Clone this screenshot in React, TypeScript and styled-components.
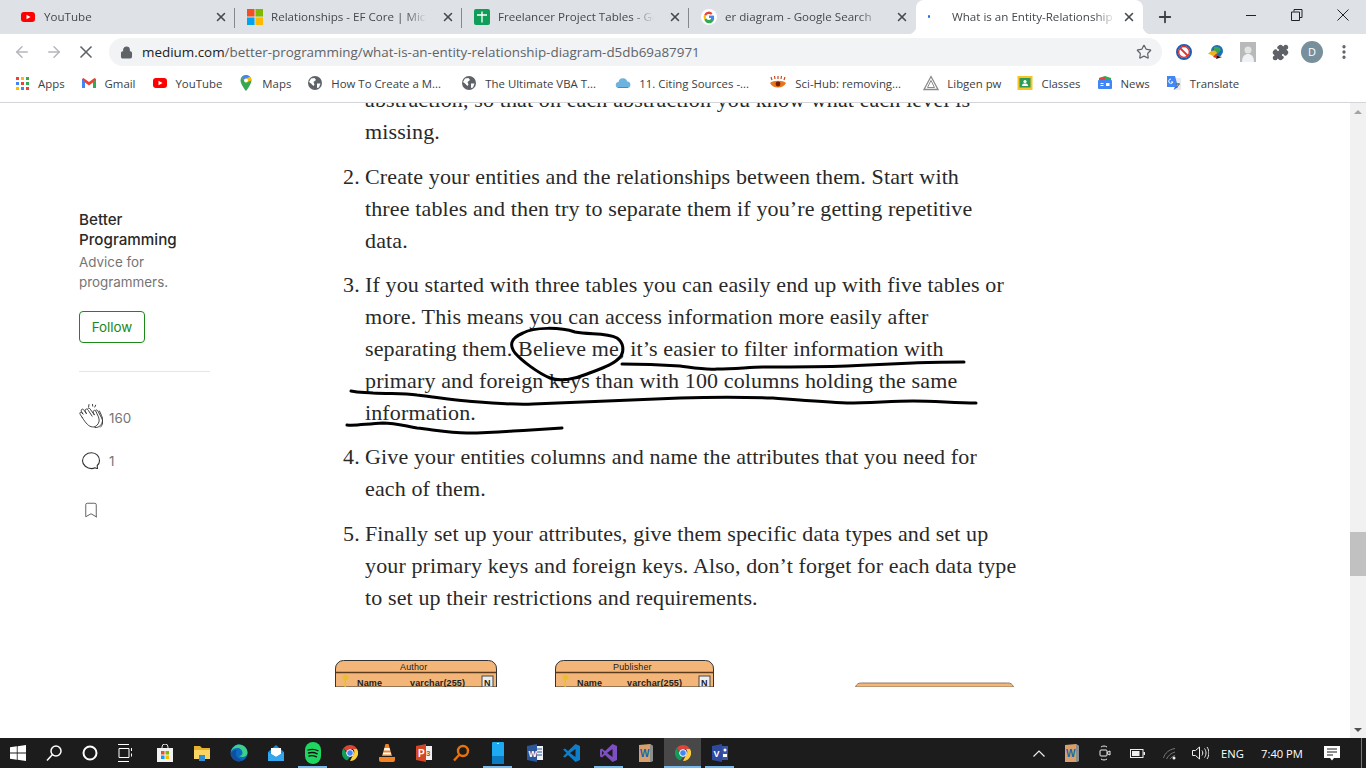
import React from 'react';
import styled, { createGlobalStyle } from 'styled-components';
import {
    ArrowLeft,
    ArrowRight,
    Bookmark,
    Lock,
    MoreVertical,
    Plus,
    Puzzle,
    Star,
    X,
} from 'lucide-react';

const GlobalStyle = createGlobalStyle`
    html, body {
        margin: 0;
        padding: 0;
        height: 100%;
        overflow: hidden;
        background: #fff;
    }
`;

const YouTubeIcon = () => (
    <svg width="16" height="16" viewBox="0 0 16 16">
        <rect x="1" y="3" width="14" height="10" rx="3" fill="#f00" />
        <path d="M6.5 5.7v4.6L10.5 8z" fill="#fff" />
    </svg>
);

const MicrosoftIcon = () => (
    <svg width="16" height="16" viewBox="0 0 16 16">
        <rect width="7.5" height="7.5" fill="#f25022" />
        <rect x="8.5" width="7.5" height="7.5" fill="#7fba00" />
        <rect y="8.5" width="7.5" height="7.5" fill="#00a4ef" />
        <rect x="8.5" y="8.5" width="7.5" height="7.5" fill="#ffb900" />
    </svg>
);

const SheetsIcon = () => (
    <svg width="16" height="16" viewBox="0 0 16 16">
        <rect width="16" height="16" rx="2" fill="#0f9d58" />
        <path d="M8 2.500v11M3 6h10" stroke="#fff" strokeWidth="1.300" />
    </svg>
);

const GoogleIcon = () => (
    <svg width="16" height="16" viewBox="0 0 16 16">
        <circle cx="8" cy="8" r="8" fill="#fff" />
        <path d="M12.6 6.8H8v2h2.7a3 3 0 0 1-5.6.4L3.300 10.600A5 5 0 0 0 13 8c0-.4 0-.8-.4-1.200z" fill="#34a853" />
        <path d="M5 9.200a3 3 0 0 1 0-2.400L3.300 5.400a5 5 0 0 0 0 5.200z" fill="#fbbc05" />
        <path d="M8 5a3 3 0 0 1 2 .8l1.500-1.500A5 5 0 0 0 3.300 5.400L5 6.800A3 3 0 0 1 8 5z" fill="#ea4335" />
        <path d="M13 8c0-.4 0-.8-.4-1.200H8v2h2.700a2.600 2.600 0 0 1-1 1.400l1.600 1.300A5 5 0 0 0 13 8z" fill="#4285f4" />
    </svg>
);

const AppsIcon = () => (
    <svg width="16" height="16" viewBox="0 0 16 16">
        {['#ea4335', '#fbbc05', '#34a853', '#4285f4', '#ea4335', '#34a853', '#fbbc05', '#4285f4', '#ea4335'].map(
            (color, index) => (
                <rect key={index} x={2 + (index % 3) * 5} y={2 + Math.floor(index / 3) * 5} width="3" height="3" fill={color} />
            ),
        )}
    </svg>
);

const GmailIcon = () => (
    <svg width="16" height="16" viewBox="0 0 16 16">
        <path d="M1 4v9h3V7.500L8 10.500l4-3V13h3V4l-1.500-1L8 7 2.500 3z" fill="#ea4335" />
        <path d="M1 4v9h3V7z" fill="#4285f4" />
        <path d="M15 4v9h-3V7z" fill="#34a853" />
    </svg>
);

const MapsIcon = () => (
    <svg width="16" height="16" viewBox="0 0 16 16">
        <path d="M8 0a5.500 5.500 0 0 0-5.500 5.500C2.500 9.500 8 16 8 16s5.500-6.500 5.500-10.500A5.500 5.500 0 0 0 8 0z" fill="#34a853" />
        <path d="M3.500 2.500 8 7.500l5.500-2a5.500 5.500 0 0 0-1.700-4z" fill="#fbbc05" />
        <path d="M8 0a5.500 5.500 0 0 0-4.500 2.500L6 5l5.800-3.500A5.500 5.500 0 0 0 8 0z" fill="#4285f4" />
        <circle cx="8" cy="5.500" r="1.900" fill="#fff" />
    </svg>
);

const WebIcon = () => (
    <svg width="16" height="16" viewBox="0 0 16 16">
        <circle cx="8" cy="8" r="7" fill="#5f6368" />
        <path d="M4 3.500 7.500 3 9 5 6.500 7l1 2.500-1 1.500L4 8.500 2 7zM10 8.500h3.500L12 12.500l-2 .5z" fill="#fff" />
    </svg>
);

const CloudIcon = () => (
    <svg width="16" height="16" viewBox="0 0 16 16">
        <path d="M4 13a3 3 0 0 1-.5-6 4.500 4.500 0 0 1 8.700-.6A3.300 3.300 0 0 1 12 13z" fill="#6db3e0" />
        <path d="M3 12h10v1H3z" fill="#3d8fc7" />
    </svg>
);

const SciHubIcon = () => (
    <svg width="18" height="16" viewBox="0 0 18 16">
        <path d="M1 8c3-3 13-3 16 0-3 6-13 6-16 0z" fill="#e8741c" />
        <circle cx="9" cy="9" r="2.400" fill="#7a1c00" />
        <path d="M3 5 2 2M6 4 5.500 1M9 4V1M12 4l.5-3M15 5l1-3" stroke="#c9471a" strokeWidth="1.200" />
    </svg>
);

const LibgenIcon = () => (
    <svg width="16" height="16" viewBox="0 0 16 16" fill="none" stroke="#8a8a8a">
        <path d="M8 1.500 15 14.500H1z" strokeWidth="1.300" />
        <path d="M8 5.500 11.500 12.500h-7z" />
    </svg>
);

const ClassesIcon = () => (
    <svg width="16" height="16" viewBox="0 0 16 16">
        <rect x="0.500" y="1" width="15" height="14" fill="#f7c325" />
        <rect x="2.500" y="3" width="11" height="9.500" fill="#2b9b57" />
        <circle cx="8" cy="6.500" r="1.600" fill="#fff" />
        <path d="M4.800 11c.3-2 1.500-2.500 3.200-2.500s2.900.5 3.200 2.500z" fill="#fff" />
    </svg>
);

const NewsIcon = () => (
    <svg width="16" height="16" viewBox="0 0 16 16">
        <path d="M2 3 8 1l6 2v2H2z" fill="#34a853" />
        <path d="M2 3l6-1v3H2z" fill="#ea4335" />
        <rect x="1" y="5" width="14" height="9" rx="1" fill="#4285f4" />
        <path d="M3.500 8h3v1h-3zM3.500 10h3v1h-3zM9 8h3.500v3H9z" fill="#fff" />
    </svg>
);

const TranslateIcon = () => (
    <svg width="16" height="16" viewBox="0 0 16 16">
        <path d="M7 3h8v12H8z" fill="#e8eaed" />
        <path d="M1 1h8l3 11H1z" fill="#4285f4" />
        <path d="M9 12 7.500 15 12 12z" fill="#3367d6" />
        <path d="M5 4a2.200 2.200 0 1 0 2 3H5" fill="none" stroke="#fff" />
        <path d="M10 9h4M12 8v1M13 9c-.5 2-1.500 3-3 3.500" fill="none" stroke="#5f6368" />
    </svg>
);

const BlockIcon = () => (
    <svg width="18" height="18" viewBox="0 0 18 18" fill="none">
        <circle cx="9" cy="9" r="7" stroke="#1a5fb4" strokeWidth="2" />
        <circle cx="9" cy="9" r="5.400" stroke="#d33" strokeWidth="1.500" />
        <path d="M5 5l8 8" stroke="#d33" strokeWidth="1.800" />
    </svg>
);

const GlobeArrowIcon = () => (
    <svg width="18" height="18" viewBox="0 0 18 18">
        <circle cx="10" cy="8" r="6" fill="#1c6fb8" />
        <path d="M7 4c3-1 6 0 7 3l-4 4-3-2z" fill="#3aa655" />
        <path d="M1 11c3-4 7-5 9-1l-3 4c-2-2-4-3-6-3z" fill="#f3b21b" />
        <path d="M9 11l3 2-3 2-3-1z" fill="#d9362b" />
        <path d="M10 13l5 1-6 2z" fill="#111" />
    </svg>
);

const PhotoExtensionIcon = () => (
    <svg width="16" height="20" viewBox="0 0 16 20">
        <rect width="16" height="20" fill="#b9b9b9" />
        <circle cx="8" cy="8" r="3.500" fill="#e3e3e3" />
        <path d="M2 20c0-6 3-8 6-8s6 2 6 8z" fill="#eef1f5" />
    </svg>
);

const ClapIcon = () => (
    <svg
        width="24"
        height="28"
        viewBox="1.500 1 20.500 24"
        preserveAspectRatio="xMidYMin meet"
        fill="none"
        stroke="#333"
        strokeWidth="0.800"
        strokeLinecap="round"
    >
        <path d="M10 1.500 9.700 3.500M13 1l.2 1.800M15.700 2l-.7 1.600" />
        <path d="M4.200 12.500C2.800 10.500 1.800 9 2.300 8.400c.6-.7 1.700 0 2.700 1.400L3.700 7.600c-.6-1.100-.3-1.800.3-2.100.7-.3 1.400.1 2 1.100l1.900 2.800L7 7.500c-.5-1-.3-1.800.4-2.100.7-.3 1.400.1 2 1l3.300 5" />
        <path d="M4.200 12.500c1.400 2.400 3 4.500 4.500 6 2.600 2.600 6 2.800 8.100.8 2-2 2.500-4.700 1.300-7.300l-2-4.400c-.5-1-1.300-1.300-1.900-1-.7.400-.7 1.200-.3 2.100l.8 1.800-3.600-5.100c-.6-.9-1.500-1.100-2-.7" />
        <path d="M19 7l1.700 3.700c1.500 3.300 1.200 6.500-.9 8.700-1.300 1.400-3 2-4.700 1.800" />
        <path d="M15.800 6.300c.5-.4 1.300-.2 1.800.6l3.300 6.200c1.400 2.900 1 5.700-1 7.700" />
    </svg>
);

const BubbleIcon = () => (
    <svg width="20" height="20" viewBox="0 0 20 20" fill="none" stroke="#333" strokeWidth="1.100">
        <path d="M16.500 17.500c-.8.100-1.700-.2-2.500-.7-1 .5-2.200.8-3.500.8C6 17.600 1.500 14 1.500 9.700S5.500 1.800 10.500 1.800s8 3.600 8 7.900c0 1.900-.8 3.500-2.300 4.800.1 1 .2 2 .3 3z" />
    </svg>
);

const WindowsIcon = () => (
    <svg width="16" height="16" viewBox="0 0 16 16">
        <path d="M0 2.300 6.800 1.300v6.300H0zM7.600 1.200 16 0v7.600H7.600zM0 8.400h6.800v6.300L0 13.700zM7.600 8.400H16V16l-8.400-1.200z" fill="#fff" />
    </svg>
);

const SearchGlassIcon = ({ color = '#fff', width = 1.500 }: { color?: string; width?: number }) => (
    <svg width="18" height="18" viewBox="0 0 18 18" fill="none" stroke={color} strokeWidth={width}>
        <circle cx="11" cy="7" r="5" />
        <path d="M7.500 10.500 2 16.500" />
    </svg>
);

const CortanaIcon = () => (
    <svg width="16" height="16" viewBox="0 0 16 16" fill="none" stroke="#fff" strokeWidth="2">
        <circle cx="8" cy="8" r="6.500" />
    </svg>
);

const TaskViewIcon = () => (
    <svg width="16" height="18" viewBox="0 0 16 18" fill="none" stroke="#fff">
        <path d="M0 .5h11M0 17.500h11M1 4.500h10v9H1zM13.500 4v3M13.500 9.500v3" />
    </svg>
);

const StoreIcon = () => (
    <svg width="16" height="18" viewBox="0 0 16 18">
        <path d="M5 5V3a3 3 0 0 1 6 0v2" fill="none" stroke="#e8e8e8" />
        <rect y="4" width="16" height="14" fill="#f2f2f2" />
        <rect x="4" y="7" width="3.500" height="3.500" fill="#f25022" />
        <rect x="8.500" y="7" width="3.500" height="3.500" fill="#7fba00" />
        <rect x="4" y="11.500" width="3.500" height="3.500" fill="#00a4ef" />
        <rect x="8.500" y="11.500" width="3.500" height="3.500" fill="#ffb900" />
    </svg>
);

const ExplorerIcon = () => (
    <svg width="16" height="16" viewBox="0 0 16 16">
        <path d="M0 1h6l2 2h8v11H0z" fill="#e8b02d" />
        <path d="M0 5h16v9H0z" fill="#fcd462" />
        <path d="M5 10h6v6H5z" fill="#2d8fd5" />
    </svg>
);

const EdgeIcon = () => (
    <svg width="18" height="18" viewBox="0 0 18 18">
        <circle cx="9" cy="9" r="8.500" fill="#0c6bc0" />
        <path d="M1 8C2 3 6 .5 9 .5c5 0 8.500 4 8.500 8 0 3-2.500 4.500-5 4.500-2 0-3.500-1-3.500-1 2 0 3.500-1 3.500-3C12.500 6 10 4 7.500 4 4.500 4 2 5.500 1 8z" fill="#3dd08c" />
        <path d="M7 6c-2 2-1.500 6 1 8 1.500 1.300 3.500 2 5 1.700-1.500 1-3 1.800-5 1.700C4 17 1 13 1 9c1-2 3.500-3.500 6-3z" fill="#0f4f9c" />
    </svg>
);

const MailIcon = () => (
    <svg width="16" height="16" viewBox="0 0 16 16">
        <path d="M0 7 8 0l8 7v9H0z" fill="#1a8bd8" />
        <path d="M3 3h10v6l-5 3-5-3z" fill="#fff" />
        <path d="M0 7l8 5 8-5v9H0z" fill="#35a7ec" />
    </svg>
);

const SpotifyIcon = () => (
    <svg width="18" height="22" viewBox="0 0 18 22">
        <rect x="1" y="0" width="16" height="22" rx="8" fill="#1ed760" />
        <path d="M4 8c3.500-1 7-.8 10 .8M4.500 11c3-.8 6-.6 8.800.8M5 14c2.500-.6 5-.4 7.500.8" fill="none" stroke="#111" strokeWidth="1.300" strokeLinecap="round" />
    </svg>
);

const ChromeIcon = () => (
    <svg width="16" height="16" viewBox="0 0 16 16">
        <path d="M8 0a8 8 0 0 1 7 4H8a4 4 0 0 0-3.700 2.500L1.600 3A8 8 0 0 1 8 0z" fill="#db4437" />
        <path d="M1.600 3l3 5.200A3.500 3.500 0 0 0 8 12l-2.800 3.500A8 8 0 0 1 1.600 3z" fill="#0f9d58" />
        <path d="M15 4a8 8 0 0 1-7 12l3-6A4 4 0 0 0 11 4z" fill="#ffcd40" />
        <circle cx="8" cy="8" r="3.400" fill="#4285f4" stroke="#fff" />
    </svg>
);

const VlcIcon = () => (
    <svg width="16" height="18" viewBox="0 0 16 18">
        <path d="M6.500 0h3L13 12H3z" fill="#f58220" />
        <path d="M5.500 4h5l.7 2.500H4.800zM4.300 8.500h7.400l.5 2H3.800z" fill="#fff" />
        <path d="M0 13h16v3a2 2 0 0 1-2 2H2a2 2 0 0 1-2-2z" fill="#f58220" />
    </svg>
);

const PowerPointIcon = () => (
    <svg width="16" height="18" viewBox="0 0 16 18">
        <rect x="5" y="2" width="11" height="14" fill="#f1f1f1" />
        <path d="M0 2 10 0v18L0 16z" fill="#d24726" />
        <text x="2" y="13" fontFamily="Liberation Sans, sans-serif" fontSize="10" fontWeight="700" fill="#fff">P</text>
        <text x="10" y="12" fontFamily="Liberation Sans, sans-serif" fontSize="8" fontWeight="700" fill="#d24726">3</text>
    </svg>
);

const PhoneAppIcon = () => (
    <svg width="12" height="22" viewBox="0 0 12 22">
        <rect width="12" height="22" rx="1" fill="#1eaaf1" />
        <rect y="14" width="12" height="8" fill="#0c7cc2" />
        <rect x="5" y="1" width="2" height="1" fill="#d8f1ff" />
    </svg>
);

const WordIcon = () => (
    <svg width="16" height="18" viewBox="0 0 16 18">
        <rect x="5" y="2" width="11" height="14" fill="#eef1f6" />
        <path d="M6 5h9M10 8h5M10 11h5" stroke="#2b579a" />
        <path d="M0 2 10 0v18L0 16z" fill="#2b579a" />
        <text x="1.500" y="13" fontFamily="Liberation Sans, sans-serif" fontSize="9" fontWeight="700" fill="#fff">W</text>
    </svg>
);

const VsCodeIcon = () => (
    <svg width="17" height="18" viewBox="0 0 17 18">
        <path d="M12.500 0 17 2v14l-4.500 2L5 11l-3 2.500L0 12.500 3.500 9 0 5.500 2 4.500 5 7z" fill="#0e7ec9" />
        <path d="M12.500 5 7 9l5.500 4z" fill="#1c1c1c" />
    </svg>
);

const VisualStudioIcon = () => (
    <svg width="17" height="18" viewBox="0 0 17 18">
        <path d="M12.500 0 17 2v14l-4.500 2L5 11l-3 2.500L0 12.500V5.500L2 4.500 5 7z" fill="#7d4fc0" />
        <path d="M12.500 5 7 9l5.500 4zM2 6.800v4.400L4 9z" fill="#1c1c1c" />
    </svg>
);

const WordBookIcon = () => (
    <svg width="14" height="18" viewBox="0 0 14 18">
        <path d="M0 1 11 0l3 2v15l-3 1H0z" fill="#d9a06b" />
        <path d="M11 0l3 2v15l-3 1z" fill="#8d8d8d" />
        <text x="1" y="13" fontFamily="Liberation Sans, sans-serif" fontSize="10" fontWeight="700" fill="#1465b5">W</text>
    </svg>
);

const VisioIcon = () => (
    <svg width="16" height="18" viewBox="0 0 16 18">
        <rect x="5" y="2" width="11" height="14" fill="#3955a3" />
        <path d="M0 2 10 0v18L0 16z" fill="#2e4a9e" />
        <text x="1.500" y="13" fontFamily="Liberation Sans, sans-serif" fontSize="9" fontWeight="700" fill="#fff">V</text>
        <circle cx="13" cy="6" r="1.500" fill="#fff" />
        <path d="M11 10h4v3h-4z" fill="#fff" />
    </svg>
);

const tabs = [
    { title: 'YouTube', icon: <YouTubeIcon /> },
    { title: 'Relationships - EF Core | Microsoft Docs', icon: <MicrosoftIcon /> },
    { title: 'Freelancer Project Tables - Google Sheets', icon: <SheetsIcon /> },
    { title: 'er diagram - Google Search', icon: <GoogleIcon /> },
];

const bookmarks = [
    { label: 'Apps', icon: <AppsIcon /> },
    { label: 'Gmail', icon: <GmailIcon /> },
    { label: 'YouTube', icon: <YouTubeIcon /> },
    { label: 'Maps', icon: <MapsIcon /> },
    { label: 'How To Create a M...', icon: <WebIcon />, truncated: true },
    { label: 'The Ultimate VBA T...', icon: <WebIcon />, truncated: true },
    { label: '11. Citing Sources -...', icon: <CloudIcon />, truncated: true },
    { label: 'Sci-Hub: removing...', icon: <SciHubIcon />, truncated: true },
    { label: 'Libgen pw', icon: <LibgenIcon /> },
    { label: 'Classes', icon: <ClassesIcon /> },
    { label: 'News', icon: <NewsIcon /> },
    { label: 'Translate', icon: <TranslateIcon /> },
];

const taskbarApps = [
    { icon: <StoreIcon /> },
    { icon: <ExplorerIcon /> },
    { icon: <EdgeIcon /> },
    { icon: <MailIcon /> },
    { icon: <SpotifyIcon />, running: true },
    { icon: <ChromeIcon /> },
    { icon: <VlcIcon /> },
    { icon: <PowerPointIcon /> },
    { icon: <SearchGlassIcon color="#e8730c" width={2.4} /> },
    { icon: <PhoneAppIcon />, running: true },
    { icon: <WordIcon /> },
    { icon: <VsCodeIcon /> },
    { icon: <VisualStudioIcon />, running: true },
    { icon: <WordBookIcon /> },
    { icon: <ChromeIcon />, running: true, active: true },
    { icon: <VisioIcon />, running: true },
];

export default function App() {
    return (
        <>
            <GlobalStyle />
            <Screen>
                <TabStrip>
                    {tabs.map((tab, index) => (
                        <Tab key={tab.title} $divided={index < 3}>
                            {tab.icon}
                            <TabTitle>{tab.title}</TabTitle>
                            <X size={14} strokeWidth={2.6} color="#45494d" />
                        </Tab>
                    ))}
                    <ActiveTab>
                        <LoadingDot />
                        <TabTitle>What is an Entity-Relationship Diagram?</TabTitle>
                        <X size={14} strokeWidth={2.6} color="#45494d" />
                    </ActiveTab>
                    <NewTab>
                        <Plus size={18} strokeWidth={2.4} color="#3c4043" />
                    </NewTab>
                    <WindowControls>
                        <WindowButton>
                            <svg width="10" height="10" viewBox="0 0 10 10" stroke="#222">
                                <path d="M0 5.500h10" />
                            </svg>
                        </WindowButton>
                        <WindowButton>
                            <svg width="12" height="12" viewBox="0 0 12 12" fill="none" stroke="#222">
                                <path d="M3 2.500V.5h8v8H9M.5 3h8v8.500h-8z" />
                            </svg>
                        </WindowButton>
                        <WindowButton>
                            <svg width="12" height="12" viewBox="0 0 12 12" stroke="#222">
                                <path d="M.5.500l11 11M11.500.500l-11 11" />
                            </svg>
                        </WindowButton>
                    </WindowControls>
                </TabStrip>

                <Toolbar>
                    <NavButton>
                        <ArrowLeft size={18} color="#b4b7bb" strokeWidth={2} />
                    </NavButton>
                    <NavButton>
                        <ArrowRight size={18} color="#b4b7bb" strokeWidth={2} />
                    </NavButton>
                    <NavButton>
                        <X size={20} color="#5f6368" strokeWidth={2} />
                    </NavButton>
                    <Omnibox>
                        <Lock size={13} color="#5f6368" fill="#5f6368" strokeWidth={2.4} />
                        <Url>
                            <UrlHost>medium.com</UrlHost>/better-programming/what-is-an-entity-relationship-diagram-d5db69a87971
                        </Url>
                        <Star size={16} color="#5f6368" strokeWidth={1.8} />
                    </Omnibox>
                    <Extensions>
                        <BlockIcon />
                        <GlobeArrowIcon />
                        <PhotoExtensionIcon />
                        <Puzzle size={17} color="#5f6368" fill="#5f6368" />
                        <Avatar>D</Avatar>
                        <MoreVertical size={18} color="#5f6368" strokeWidth={2.4} />
                    </Extensions>
                </Toolbar>

                <BookmarkBar>
                    {bookmarks.map((item) => (
                        <BookmarkItem key={item.label} $truncated={item.truncated}>
                            {item.icon}
                            <span>{item.label}</span>
                        </BookmarkItem>
                    ))}
                </BookmarkBar>

                <Viewport>
                    <Page>
                        <Sidebar>
                            <Publication>Better Programming</Publication>
                            <Tagline>Advice for programmers.</Tagline>
                            <FollowButton>Follow</FollowButton>
                            <SideDivider />
                            <Stat $offset={32} $gap={6}>
                                <ClapIcon />
                                <span>160</span>
                            </Stat>
                            <Stat $offset={19} $gap={8} $indent={2}>
                                <BubbleIcon />
                                <span>1</span>
                            </Stat>
                            <Stat $offset={30} $indent={3}>
                                <Bookmark size={18} color="#444" strokeWidth={1.1} />
                            </Stat>
                        </Sidebar>

                        <Article>
                            <Step>
                                <StepText>
                                    abstraction, so that on each abstraction you know what each level is
                                    <br />
                                    missing.
                                </StepText>
                            </Step>
                            <Step>
                                <StepNumber>2.</StepNumber>
                                <StepText>
                                    Create your entities and the relationships between them. Start with
                                    <br />
                                    three tables and then try to separate them if you’re getting repetitive
                                    <br />
                                    data.
                                </StepText>
                            </Step>
                            <Step>
                                <StepNumber>3.</StepNumber>
                                <StepText>
                                    If you started with three tables you can easily end up with five tables or
                                    <br />
                                    more. This means you can access information more easily after
                                    <br />
                                    separating them. Believe me, it’s easier to filter information with
                                    <br />
                                    primary and foreign keys than with 100 columns holding the same
                                    <br />
                                    information.
                                </StepText>
                            </Step>
                            <Step>
                                <StepNumber>4.</StepNumber>
                                <StepText>
                                    Give your entities columns and name the attributes that you need for
                                    <br />
                                    each of them.
                                </StepText>
                            </Step>
                            <Step>
                                <StepNumber>5.</StepNumber>
                                <StepText>
                                    Finally set up your attributes, give them specific data types and set up
                                    <br />
                                    your primary keys and foreign keys. Also, don’t forget for each data type
                                    <br />
                                    to set up their restrictions and requirements.
                                </StepText>
                            </Step>
                            <Figure>
                                <svg width="690" height="27" viewBox="0 0 690 27">
                                    <g fontFamily="Liberation Sans, sans-serif" fontSize="9" fill="#222">
                                        <path d="M.5 27V9a8 8 0 0 1 8-8.500h145a8 8 0 0 1 8 8.500v18z" fill="#f4b678" stroke="#333" />
                                        <path d="M1 12.500h160" stroke="#5b3a1c" strokeWidth="1.500" />
                                        <text x="65" y="10">Author</text>
                                        <path d="M11 15a2.500 2.500 0 1 1 0 5v7h-1.500v-7a2.500 2.500 0 0 1 1.500-5z" fill="#e6c229" />
                                        <text x="22" y="26" fontWeight="700">Name</text>
                                        <text x="75" y="26" fontWeight="700">varchar(255)</text>
                                        <rect x="147" y="16" width="11" height="11" fill="#eee" stroke="#444" />
                                        <text x="149" y="26" fontWeight="700">N</text>

                                        <path d="M220.500 27V9a8 8 0 0 1 8-8.500h142a8 8 0 0 1 8 8.500v18z" fill="#f4b678" stroke="#333" />
                                        <path d="M221 12.500h157" stroke="#5b3a1c" strokeWidth="1.500" />
                                        <text x="278" y="10">Publisher</text>
                                        <path d="M231 15a2.500 2.500 0 1 1 0 5v7h-1.500v-7a2.500 2.500 0 0 1 1.500-5z" fill="#e6c229" />
                                        <text x="242" y="26" fontWeight="700">Name</text>
                                        <text x="292" y="26" fontWeight="700">varchar(255)</text>
                                        <rect x="364" y="16" width="11" height="11" fill="#eee" stroke="#444" />
                                        <text x="366" y="26" fontWeight="700">N</text>

                                        <path d="M520.500 27a6 6 0 0 1 6-4h146a6 6 0 0 1 6 4z" fill="#f4b678" stroke="#8a7a6a" />
                                    </g>
                                </svg>
                            </Figure>
                        </Article>

                        <InkLayer width="1350" height="636" viewBox="0 102 1350 636">
                            <InkStroke d="M523 332C534 326 560 326 575 331C590 334 606 331 617 337C624 342 624 350 621 355C614 364 600 368 587 373C575 378 560 381 550 377C538 372 522 360 515 352C510 345 509 338 523 332Z" />
                            <InkStroke d="M622 363C645 363 665 364 680 365C695 367 705 369 717 368C735 368 750 366 763 366C790 366 820 366 847 365C870 364 895 363 913 362C930 361 950 361 964 361" />
                            <InkStroke d="M351 390C360 392 366 391 373 392C390 393 403 392 417 394C435 396 450 399 467 400C490 402 510 404 533 403C555 402 585 401 607 400C630 399 655 398 680 397C710 396 745 396 773 397C800 399 825 401 847 402C870 402 892 400 913 400C935 400 955 402 976 402" />
                            <InkStroke d="M347 424C355 425 365 423 383 422C395 422 405 425 417 427C435 429 450 432 467 432C485 432 500 431 513 430C530 429 548 428 562 427" />
                        </InkLayer>
                    </Page>

                    <ScrollTrack>
                        <ScrollArrow $direction="up" />
                        <ScrollRail>
                            <ScrollThumb />
                        </ScrollRail>
                        <ScrollArrow $direction="down" />
                    </ScrollTrack>
                </Viewport>

                <Taskbar>
                    <SystemButton>
                        <WindowsIcon />
                    </SystemButton>
                    <SystemButton>
                        <SearchGlassIcon />
                    </SystemButton>
                    <SystemButton>
                        <CortanaIcon />
                    </SystemButton>
                    <SystemButton>
                        <TaskViewIcon />
                    </SystemButton>
                    <TaskApps>
                        {taskbarApps.map((app, index) => (
                            <TaskButton key={index} $running={app.running} $active={app.active}>
                                {app.icon}
                            </TaskButton>
                        ))}
                    </TaskApps>
                    <Tray>
                        <TrayItem $width={33}>
                            <svg width="12" height="7" viewBox="0 0 12 7" fill="none" stroke="#eee" strokeWidth="1.200">
                                <path d="M.5 6.500 6 1l5.500 5.500" />
                            </svg>
                        </TrayItem>
                        <TrayItem $width={33}>
                            <WordBookIcon />
                        </TrayItem>
                        <TrayItem $width={33}>
                            <svg width="12" height="16" viewBox="0 0 12 16" fill="none" stroke="#eee">
                                <path d="M2 2c2-1.300 4-1.300 6 0M2 14c2 1.300 4 1.300 6 0" />
                                <rect x="1" y="5" width="7" height="6" rx="1" />
                                <path d="M8 7.500 11 6v4L8 8.500" />
                            </svg>
                        </TrayItem>
                        <TrayItem $width={32}>
                            <svg width="15" height="9" viewBox="0 0 15 9">
                                <rect x=".5" y=".5" width="12.500" height="8" fill="none" stroke="#eee" />
                                <rect x="2" y="2" width="7.500" height="5" fill="#eee" />
                                <rect x="13.500" y="3" width="1.500" height="3" fill="#eee" />
                            </svg>
                        </TrayItem>
                        <TrayItem $width={32}>
                            <svg width="13" height="13" viewBox="0 0 13 13" fill="none" stroke="#777">
                                <path d="M.5 11C2 6 6 2.500 12 1.500M3.500 12C5 9 8 6 12 5M7 12c1-1.500 3-3 5-3.500" />
                                <circle cx="11" cy="11" r="1.500" fill="#eee" stroke="none" />
                            </svg>
                        </TrayItem>
                        <TrayItem $width={30}>
                            <svg width="17" height="14" viewBox="0 0 17 14" fill="none" stroke="#eee">
                                <path d="M.5 4.500h3L7.500 1v12l-4-3.500h-3zM10 4.500c1 1.500 1 3.500 0 5M12.500 2.500c2 2.800 2 6.200 0 9M15 1c2.500 3.500 2.500 8.500 0 12" />
                            </svg>
                        </TrayItem>
                        <TrayText $width={35}>ENG</TrayText>
                        <TrayText $width={64}>7:40 PM</TrayText>
                        <NotificationSlot>
                            <svg width="16" height="15" viewBox="0 0 16 15">
                                <path d="M0 0h16v12h-6l-2 2.500L6 12H0z" fill="#fff" />
                                <path d="M3 3h10M3 6h10M3 9h6" stroke="#1c1c1c" />
                            </svg>
                        </NotificationSlot>
                    </Tray>
                </Taskbar>
            </Screen>
        </>
    );
}

const Screen = styled.div`
    width: 1366px;
    height: 768px;
    display: flex;
    flex-direction: column;
    overflow: hidden;
    font-family: 'Open Sans', 'Noto Sans', sans-serif;
`;

const TabStrip = styled.div`
    height: 34px;
    flex: none;
    display: flex;
    align-items: stretch;
    padding-left: 8px;
    background: #dee1e6;
`;

const Tab = styled.div<{ $divided?: boolean }>`
    width: 227px;
    box-sizing: border-box;
    flex: none;
    display: flex;
    align-items: center;
    gap: 8px;
    padding: 0 7px 0 12px;
    color: #45494d;
    position: relative;

    &::after {
        content: '';
        display: ${({ $divided }) => ($divided ? 'block' : 'none')};
        position: absolute;
        right: 0;
        top: 8px;
        bottom: 6px;
        width: 1px;
        background: #85888c;
    }
`;

const ActiveTab = styled(Tab)`
    background: #fff;
    border-radius: 8px 8px 0 0;
    padding-left: 12px;
    gap: 0;

    &::before,
    &::after {
        content: '';
        display: block;
        position: absolute;
        top: auto;
        bottom: 0;
        width: 8px;
        height: 8px;
        background: none;
    }

    &::before {
        left: -8px;
        background: radial-gradient(circle at 0 0, transparent 8px, #fff 8.500px);
    }

    &::after {
        right: -8px;
        background: radial-gradient(circle at 100% 0, transparent 8px, #fff 8.500px);
    }
`;

const LoadingDot = styled.span`
    flex: none;
    width: 2px;
    height: 3px;
    margin: 0 22px 2px 0;
    border-radius: 1px;
    background: #1a73e8;
`;

const TabTitle = styled.span`
    flex: 1;
    min-width: 0;
    margin-right: 6px;
    overflow: hidden;
    white-space: nowrap;
    font-size: 11.600px;
    line-height: 16px;
    -webkit-mask-image: linear-gradient(to right, #000 calc(100% - 22px), transparent);
    mask-image: linear-gradient(to right, #000 calc(100% - 22px), transparent);
`;

const NewTab = styled.div`
    width: 28px;
    margin-left: 8px;
    display: flex;
    align-items: center;
    justify-content: center;
`;

const WindowControls = styled.div`
    margin-left: auto;
    display: flex;
`;

const WindowButton = styled.div`
    width: 46px;
    height: 30px;
    display: flex;
    align-items: center;
    justify-content: center;
`;

const Toolbar = styled.div`
    height: 36px;
    flex: none;
    box-sizing: border-box;
    display: flex;
    align-items: center;
    padding: 0 0 0 6px;
    background: #fff;
`;

const NavButton = styled.div`
    width: 32px;
    flex: none;
    display: flex;
    justify-content: center;
`;

const Omnibox = styled.div`
    width: 1053px;
    height: 28px;
    margin-left: 7px;
    box-sizing: border-box;
    flex: none;
    display: flex;
    align-items: center;
    gap: 10px;
    padding: 0 10px 0 11px;
    border-radius: 14px;
    background: #f1f3f4;
`;

const Url = styled.div`
    flex: 1;
    margin-left: -1px;
    font-size: 13.420px;
    color: #5f6368;
    white-space: nowrap;
`;

const UrlHost = styled.span`
    color: #202124;
`;

const Extensions = styled.div`
    display: grid;
    grid-template-columns: repeat(6, 32px);
    align-items: center;
    justify-items: center;
    margin-left: 6px;
`;

const Avatar = styled.div`
    width: 22px;
    height: 22px;
    border-radius: 50%;
    background: #78909c;
    color: #fff;
    font-size: 11px;
    line-height: 22px;
    text-align: center;
`;

const BookmarkBar = styled.div`
    height: 33px;
    flex: none;
    box-sizing: border-box;
    display: flex;
    align-items: center;
    gap: 16px;
    padding: 0 0 6px 14px;
    background: #fff;
    border-bottom: 1px solid #d3d5d8;
`;

const BookmarkItem = styled.div<{ $truncated?: boolean }>`
    ${({ $truncated }) => ($truncated ? 'width: 138px;' : '')}
    flex: none;
    display: flex;
    align-items: center;
    gap: 8px;
    font-size: 11.400px;
    color: #3c4043;
    white-space: nowrap;
`;

const Viewport = styled.div`
    flex: 1;
    min-height: 0;
    display: flex;
    background: #fff;
`;

const Page = styled.main`
    flex: 1;
    min-width: 0;
    display: flex;
    align-items: flex-start;
    position: relative;
    overflow: hidden;
`;

const Sidebar = styled.aside`
    width: 131px;
    flex: none;
    margin: 107px 0 0 79px;
    font-family: Inter, 'Liberation Sans', sans-serif;
`;

const Publication = styled.div`
    font-size: 15.200px;
    line-height: 20px;
    font-weight: 500;
    color: #292929;
`;

const Tagline = styled.div`
    margin-top: 2px;
    font-size: 13.400px;
    line-height: 20px;
    color: #757575;
`;

const FollowButton = styled.div`
    width: 66px;
    height: 32px;
    margin-top: 19px;
    box-sizing: border-box;
    border: 1px solid #1a8917;
    border-radius: 4px;
    color: #1a8917;
    font-size: 13.400px;
    line-height: 30px;
    text-align: center;
`;

const SideDivider = styled.div`
    height: 1px;
    margin-top: 28px;
    background: #e6e6e6;
`;

const Stat = styled.div<{ $offset: number; $gap?: number; $indent?: number }>`
    display: flex;
    align-items: center;
    gap: ${({ $gap = 5 }) => $gap}px;
    margin-top: ${({ $offset }) => $offset}px;
    margin-left: ${({ $indent = 0 }) => $indent}px;
    font-size: 13.400px;
    color: #757575;
`;

const Article = styled.article`
    margin: -18.700px 0 0 133px;
    display: flex;
    flex-direction: column;
    gap: 12.300px;
    font-family: 'Liberation Serif', serif;
    font-size: 22px;
    letter-spacing: 0.130px;
    line-height: 32px;
    color: #292929;
    white-space: nowrap;
`;

const Step = styled.div`
    display: grid;
    grid-template-columns: 22px auto;
`;

const StepNumber = styled.span`
    grid-column: 1;
`;

const StepText = styled.div`
    grid-column: 2;
`;

const Figure = styled.figure`
    margin: 34.500px 0 0 -8px;
    height: 27px;
    overflow: hidden;

    svg {
        display: block;
    }
`;

const InkLayer = styled.svg`
    position: absolute;
    top: 0;
    left: 0;
    pointer-events: none;
`;

const InkStroke = styled.path`
    fill: none;
    stroke: #000;
    stroke-width: 3;
    stroke-linecap: round;
    stroke-linejoin: round;
`;

const ScrollTrack = styled.div`
    width: 16px;
    flex: none;
    display: flex;
    flex-direction: column;
    background: #f1f1f1;
`;

const ScrollArrow = styled.div<{ $direction: 'up' | 'down' }>`
    height: 17px;
    flex: none;
    display: flex;
    align-items: center;
    justify-content: center;

    &::before {
        content: '';
        border-left: 4px solid transparent;
        border-right: 4px solid transparent;
        ${({ $direction }) =>
            $direction === 'up' ? 'border-bottom: 4px solid #a3a3a3;' : 'border-top: 4px solid #505050;'}
    }
`;

const ScrollRail = styled.div`
    flex: 1;
    padding-top: 412px;
`;

const ScrollThumb = styled.div`
    height: 44px;
    background: #c1c1c1;
`;

const Taskbar = styled.footer`
    height: 30px;
    flex: none;
    display: flex;
    background: #1c1c1c;
`;

const SystemButton = styled.div`
    width: 36px;
    flex: none;
    display: flex;
    align-items: center;
    justify-content: center;
`;

const TaskApps = styled.div`
    display: flex;
    margin-left: 2px;
`;

const TaskButton = styled.div<{ $running?: boolean; $active?: boolean }>`
    width: 37px;
    flex: none;
    box-sizing: border-box;
    display: flex;
    align-items: center;
    justify-content: center;
    background: ${({ $active }) => ($active ? '#484848' : 'transparent')};
    position: relative;

    &::after {
        content: '';
        display: ${({ $running }) => ($running ? 'block' : 'none')};
        position: absolute;
        left: ${({ $active }) => ($active ? 0 : 4)}px;
        right: ${({ $active }) => ($active ? 0 : 4)}px;
        bottom: 0;
        height: 2px;
        background: #76b9ed;
    }
`;

const Tray = styled.div`
    margin-left: auto;
    display: flex;
    align-items: center;
    color: #fff;
`;

const TrayItem = styled.div<{ $width: number }>`
    width: ${({ $width }) => $width}px;
    display: flex;
    justify-content: center;
`;

const TrayText = styled.div<{ $width: number }>`
    width: ${({ $width }) => $width}px;
    text-align: center;
    font-size: 11.200px;
`;

const NotificationSlot = styled.div`
    width: 45px;
    height: 30px;
    box-sizing: border-box;
    padding-right: 14px;
    display: flex;
    align-items: center;
    justify-content: center;
    border-right: 1px solid #777;
    margin-right: 4px;
    margin-left: 3px;
`;
